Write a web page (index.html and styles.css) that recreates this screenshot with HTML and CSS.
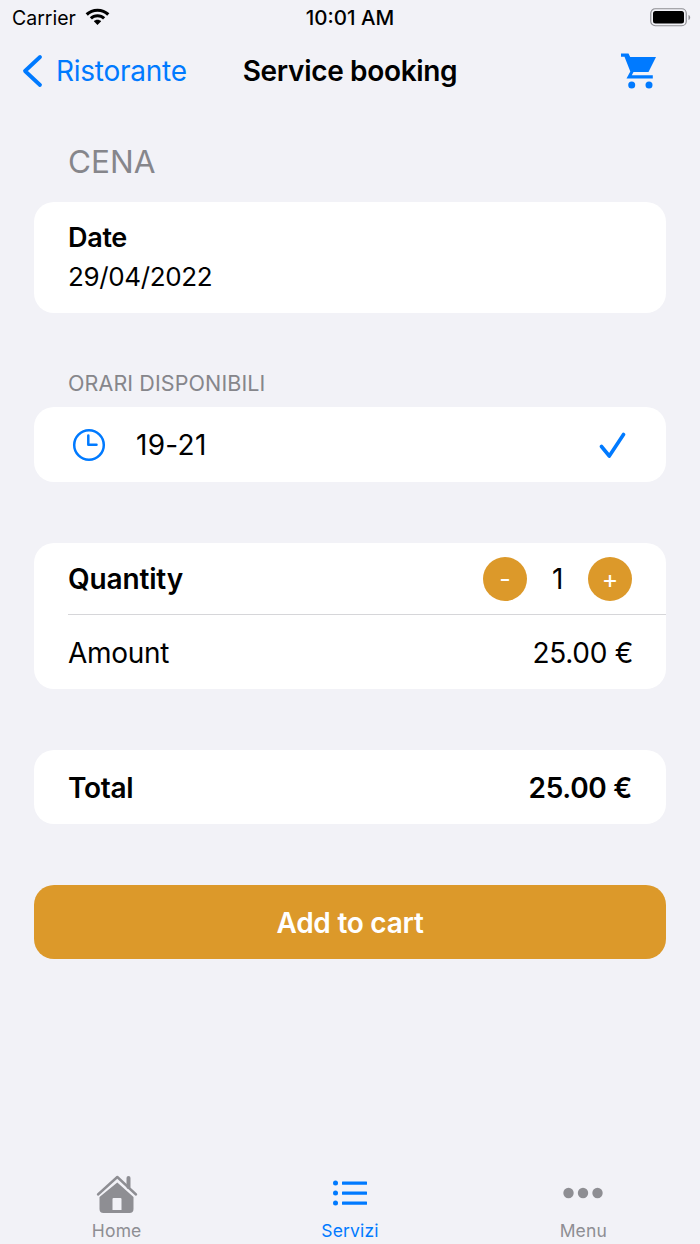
FILE: index.html
```html
<!DOCTYPE html>
<html lang="it">
<head>
    <meta charset="UTF-8">
    <meta name="viewport" content="width=device-width, initial-scale=1.0">
    <title>Service booking</title>
    <link rel="stylesheet" href="styles.css">
</head>
<body>
<div class="screen">

    <!-- Status bar -->
    <div class="status-bar">
        <div class="status-left">
            <span class="carrier">Carrier</span>
            <svg class="wifi" width="25" height="18" viewBox="1 2.500 24 17">
                <path d="M13 3C8.600 3 4.600 4.700 1.600 7.500L3.700 9.700C6.100 7.400 9.400 6 13 6s6.900 1.400 9.300 3.700l2.100-2.200C21.400 4.700 17.400 3 13 3z" fill="#000"/>
                <path d="M13 8.300c-2.900 0-5.500 1.100-7.400 2.900l2.100 2.200c1.400-1.300 3.300-2.100 5.300-2.100s3.900.8 5.300 2.100l2.100-2.200c-1.900-1.800-4.500-2.900-7.400-2.900z" fill="#000"/>
                <path d="M13 13.600c-1.400 0-2.600.5-3.500 1.400L13 18.600l3.500-3.600c-.9-.9-2.100-1.400-3.500-1.400z" fill="#000"/>
            </svg>
        </div>
        <span class="clock">10:01 AM</span>
        <div class="status-right">
            <svg width="42" height="19" viewBox="0 0 42 19">
                <rect x="0.750" y="0.750" width="35.500" height="17" rx="4.500" fill="none" stroke="#8e8e93" stroke-width="1.200"/>
                <rect x="3" y="3" width="31" height="12.500" rx="2.500" fill="#000"/>
                <path d="M38.500 7v5c1-.3 1.700-1.300 1.700-2.500S39.500 7.300 38.500 7z" fill="#8e8e93"/>
            </svg>
        </div>
    </div>

    <!-- Navigation -->
    <nav class="navbar">
        <a class="nav-back">
            <svg width="22" height="34" viewBox="0 0 22 34">
                <path d="M19 3L4 17L19 31" fill="none" stroke="#007aff" stroke-width="3.800" stroke-linecap="round" stroke-linejoin="round"/>
            </svg>
            <span>Ristorante</span>
        </a>
        <span class="nav-title">Service booking</span>
        <svg class="nav-cart" width="38" height="38" viewBox="0 0 38 38">
            <path d="M1 1.500h7.500l1.700 3.500H36l-7.500 15H13.500l-1.700 3.200h21v3.300H6.500l3.800-7L4.500 4.800H1z" fill="#007aff"/>
            <circle cx="11.700" cy="33" r="3.500" fill="#007aff"/>
            <circle cx="29" cy="33" r="3.500" fill="#007aff"/>
        </svg>
    </nav>

    <main class="content">
        <h2 class="page-heading">CENA</h2>

        <section class="card date-card">
            <p class="date-label">Date</p>
            <p class="date-value">29/04/2022</p>
        </section>

        <p class="section-label">ORARI DISPONIBILI</p>
        <section class="card row time-row">
            <svg class="clock-icon" width="34" height="34" viewBox="0 0 34 34">
                <circle cx="17" cy="17" r="14.800" fill="none" stroke="#007aff" stroke-width="2.500"/>
                <path d="M16.300 7.500V16.800H24.500" fill="none" stroke="#007aff" stroke-width="2.500" stroke-linecap="round" stroke-linejoin="round"/>
            </svg>
            <span class="time-text">19-21</span>
            <svg class="check-icon" width="28" height="28" viewBox="0 0 28 28">
                <path d="M2.500 15.500L10.300 25L24.500 3.500" fill="none" stroke="#007aff" stroke-width="3.600" stroke-linecap="round" stroke-linejoin="round"/>
            </svg>
        </section>

        <section class="card qty-card">
            <div class="row qty-row">
                <span class="bold-text">Quantity</span>
                <div class="stepper">
                    <span class="step-btn">-</span>
                    <span class="qty-value">1</span>
                    <span class="step-btn">+</span>
                </div>
            </div>
            <div class="row amount-row">
                <span>Amount</span>
                <span>25.00 €</span>
            </div>
        </section>

        <section class="card row total-card">
            <span class="bold-text">Total</span>
            <span class="bold-text">25.00 €</span>
        </section>

        <a class="add-btn">Add to cart</a>
    </main>

    <!-- Tab bar -->
    <footer class="tabbar">
        <div class="tab">
            <svg width="42" height="40" viewBox="0 0 42 40">
                <path d="M2 20.500L21.300 3L40 20.500" fill="none" stroke="#8e8e93" stroke-width="2.400" stroke-linecap="round" stroke-linejoin="round"/>
                <path d="M32.500 4V13" fill="none" stroke="#8e8e93" stroke-width="4" stroke-linecap="round"/>
                <path fill-rule="evenodd" d="M21.300 8.500L37.500 23V35a4 4 0 0 1-4 4H7.500a4 4 0 0 1-4-4V23zM17.500 24a1 1 0 0 0-1 1V36h9V25a1 1 0 0 0-1-1z" fill="#8e8e93"/>
            </svg>
            <span>Home</span>
        </div>
        <div class="tab active">
            <svg width="42" height="40" viewBox="0 0 42 40">
                <circle cx="6.500" cy="9" r="2.500" fill="#007aff"/>
                <circle cx="6.500" cy="19" r="2.500" fill="#007aff"/>
                <circle cx="6.500" cy="29" r="2.500" fill="#007aff"/>
                <rect x="13" y="7.500" width="25" height="3.200" rx="0.500" fill="#007aff"/>
                <rect x="13" y="17.500" width="25" height="3.200" rx="0.500" fill="#007aff"/>
                <rect x="13" y="27.500" width="25" height="3.200" rx="0.500" fill="#007aff"/>
            </svg>
            <span>Servizi</span>
        </div>
        <div class="tab">
            <svg width="42" height="40" viewBox="0 0 42 40">
                <circle cx="6.500" cy="19" r="5.200" fill="#8e8e93"/>
                <circle cx="21" cy="19" r="5.200" fill="#8e8e93"/>
                <circle cx="35.500" cy="19" r="5.200" fill="#8e8e93"/>
            </svg>
            <span>Menu</span>
        </div>
    </footer>

</div>
</body>
</html>
```

FILE: styles.css
```css
* {
    box-sizing: border-box;
}

body {
    margin: 0;
    padding: 0;
    background: #f2f2f7;
    color: #000;
    font-family: Inter, "Liberation Sans", sans-serif;
}

p, h2 {
    margin: 0;
    font-weight: normal;
}

.screen {
    display: flex;
    flex-direction: column;
    height: 1244px;
    overflow: hidden;
}

/* Status bar */
.status-bar {
    display: grid;
    grid-template-columns: 1fr auto 1fr;
    align-items: center;
    height: 35px;
    padding: 0 8px;
}
.status-left {
    display: flex;
    align-items: center;
    gap: 9px;
    padding-left: 4px;
}
.carrier {
    font-size: 19.500px;
}
.wifi {
    margin-top: -1px;
}
.clock {
    font-size: 20.500px;
    font-weight: 500;
}
.status-right {
    display: flex;
    justify-content: flex-end;
}

/* Navigation */
.navbar {
    display: flex;
    align-items: center;
    position: relative;
    height: 72px;
    padding: 0 42px 0 21px;
}
.nav-back {
    display: flex;
    align-items: center;
    gap: 13px;
    color: #007aff;
    font-size: 28px;
    letter-spacing: -0.250px;
}
.nav-title {
    position: absolute;
    left: 0;
    right: 0;
    text-align: center;
    font-size: 28px;
    font-weight: 600;
    letter-spacing: -0.330px;
}
.nav-cart {
    margin-left: auto;
}

/* Content */
.content {
    flex: 1;
    padding: 0 34px;
}
.page-heading {
    padding: 35px 34px 0;
    height: 95px;
    font-size: 31.500px;
    line-height: 40px;
    color: #86868b;
}
.card {
    background: #fff;
    border-radius: 20px;
    font-size: 28px;
    letter-spacing: -0.300px;
}
.row {
    display: flex;
    align-items: center;
    justify-content: space-between;
}
.row span {
    padding-top: 2px;
}
.bold-text {
    font-weight: 600;
}

.date-card {
    height: 111px;
    padding: 17px 34px;
}
.date-label {
    font-size: 27px;
    font-weight: 600;
    line-height: 38px;
}
.date-value {
    font-size: 26px;
    line-height: 40px;
    letter-spacing: -0.370px;
}

.section-label {
    margin-top: 58px;
    height: 36px;
    padding-left: 34px;
    font-size: 21.500px;
    line-height: 24px;
    color: #86868b;
    letter-spacing: 0.100px;
}

.time-row {
    height: 75px;
    padding: 0 39px 0 38px;
}
.clock-icon {
    flex-shrink: 0;
}
.row .time-text {
    margin-left: 30px;
    margin-right: auto;
    padding-top: 0;
    letter-spacing: 0.300px;
}

.qty-card {
    margin-top: 61px;
    height: 146px;
    padding-left: 34px;
}
.qty-row {
    height: 72px;
    padding-right: 34px;
    border-bottom: 1px solid #d6d6d9;
    letter-spacing: -0.150px;
}
.qty-row .bold-text {
    padding-top: 0;
}
.stepper {
    display: flex;
    align-items: center;
}
.row .step-btn {
    width: 44px;
    height: 44px;
    padding-top: 0;
    border-radius: 50%;
    background: #dc992a;
    color: #fff;
    font-size: 25px;
    line-height: 45px;
    text-align: center;
}
.row .qty-value {
    width: 61px;
    padding-top: 0;
    text-align: center;
}
.amount-row {
    height: 74px;
    padding-right: 33px;
}

.total-card {
    margin-top: 61px;
    height: 74px;
    padding: 0 34px;
}

.add-btn {
    display: block;
    margin-top: 61px;
    height: 74px;
    border-radius: 20px;
    background: #dc992a;
    color: #fff;
    font-size: 28px;
    font-weight: 600;
    line-height: 76px;
    text-align: center;
    letter-spacing: -0.250px;
}

/* Tab bar */
.tabbar {
    display: grid;
    grid-template-columns: repeat(3, 1fr);
    height: 74px;
    padding-top: 4px;
}
.tab {
    display: flex;
    flex-direction: column;
    align-items: center;
    color: #8e8e93;
    font-size: 17.500px;
    line-height: 22px;
    letter-spacing: 0.150px;
}
.tab svg {
    height: 40px;
    margin-bottom: 6px;
}
.tab.active {
    color: #007aff;
}
```
